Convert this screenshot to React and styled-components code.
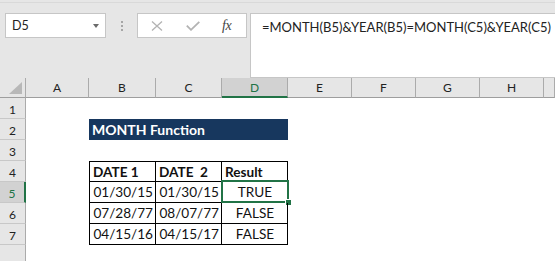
import React from "react"
import styled, { createGlobalStyle } from "styled-components"

const GlobalStyle = createGlobalStyle`
  body {
    margin: 0;
    font-family: Lato, "Liberation Sans", sans-serif;
  }
`

const green = "#217346"

const Window = styled.div`
  width: 555px;
  height: 261px;
  overflow: hidden;
  background: #e6e6e6;
  display: flex;
  flex-direction: column;
`

const FormulaRow = styled.div`
  height: 86px;
  box-sizing: border-box;
  margin-top: 2px;
  border-top: 1px solid #d9d9d9;
  padding: 10px 0 0 5px;
  display: flex;
  align-items: flex-start;
`

const NameBox = styled.div`
  width: 101px;
  height: 25px;
  box-sizing: border-box;
  background: white;
  border: 1px solid #c6c6c6;
  padding: 0 6px 0 6px;
  display: flex;
  align-items: center;
  justify-content: space-between;
  font-size: 12.5px;
  color: #222;
`

const Caret = styled.span`
  width: 0;
  height: 0;
  border-left: 3.5px solid transparent;
  border-right: 3.5px solid transparent;
  border-top: 4px solid #6a6a6a;
`

const Grip = styled.div`
  width: 31px;
  height: 25px;
  display: flex;
  flex-direction: column;
  align-items: center;
  justify-content: center;
  gap: 2px;
`

const Dot = styled.span`
  width: 2px;
  height: 2px;
  background: #a6a6a6;
`

const FxBox = styled.div`
  width: 110px;
  height: 25px;
  box-sizing: border-box;
  background: white;
  border: 1px solid #c6c6c6;
  display: flex;
  align-items: center;
  padding: 0 0 0 13px;
`

const Fx = styled.span`
  font-family: "Liberation Serif", serif;
  font-style: italic;
  font-size: 14px;
  color: #444;
  margin-left: 22px;
  letter-spacing: -0.5px;
`

const FormulaInput = styled.div`
  flex: 1;
  margin-left: 3px;
  height: 65px;
  box-sizing: border-box;
  background: white;
  border: 1px solid #c6c6c6;
  border-right: none;
  padding: 5px 0 0 11px;
  font-size: 13px;
  color: #222;
  white-space: nowrap;
`

const Sheet = styled.div`
  display: grid;
  grid-template-columns: 26px 63px 67px 66px 66px 64px 64px 64px 64px 1fr;
  grid-template-rows: 20px repeat(8, 21px);
  background: white;
`

const Corner = styled.div`
  background: #e6e6e6;
  border-bottom: 1px solid #9e9e9e;
  border-right: 1px solid #ababab;
  box-sizing: border-box;
  display: flex;
  align-items: flex-end;
  justify-content: flex-end;
  padding: 0 3px 3px 0;
`

const ColHead = styled.div`
  box-sizing: border-box;
  background: ${p => (p.$active ? "#d2d2d2" : "#e6e6e6")};
  border-right: 1px solid #ababab;
  border-bottom: ${p => (p.$active ? `2px solid ${green}` : "1px solid #9e9e9e")};
  display: flex;
  align-items: center;
  justify-content: center;
  padding-top: ${p => (p.$active ? "1px" : "0")};
  font-size: 12px;
  color: ${p => (p.$active ? green : "#222")};
`

const RowHead = styled.div`
  box-sizing: border-box;
  background: ${p => (p.$active ? "#d2d2d2" : "#e6e6e6")};
  border-bottom: 1px solid #c8c8c8;
  border-right: ${p => (p.$active ? `2px solid ${green}` : "1px solid #ababab")};
  display: flex;
  align-items: center;
  justify-content: center;
  padding-top: 3px;
  font-size: 12px;
  color: ${p => (p.$active ? green : "#222")};
`

const Cell = styled.div`
  position: relative;
  box-sizing: border-box;
  font-size: 13.6px;
  line-height: 20px;
  color: #111;
  white-space: pre;
  text-align: ${p => p.$align || "left"};
  padding: 0 2px 0 3px;
  font-weight: ${p => (p.$bold ? 700 : 400)};
  border-right: ${p => (p.$boxed ? "1px solid #000" : "none")};
  border-bottom: ${p => (p.$boxed ? "1px solid #000" : "none")};
  border-left: ${p => (p.$left ? "1px solid #000" : "none")};
  border-top: ${p => (p.$top ? "1px solid #000" : "none")};
`

const Title = styled.div`
  grid-column: 3 / span 3;
  background: #17375e;
  color: white;
  font-weight: 700;
  font-size: 14px;
  line-height: 21px;
  padding-left: 3px;
`

const Selection = styled.div`
  position: absolute;
  left: -1px;
  top: -2px;
  right: -2px;
  bottom: -1px;
  border: 2px solid ${green};
  pointer-events: none;
`

const Handle = styled.span`
  position: absolute;
  right: -4px;
  bottom: -4px;
  width: 5px;
  height: 5px;
  background: ${green};
  border: 1px solid white;
  border-right: none;
  border-bottom: none;
`

const columns = ["A", "B", "C", "D", "E", "F", "G", "H", "I"]

const table = {
  4: [
    { text: "DATE 1", bold: true },
    { text: "DATE  2", bold: true },
    { text: "Result", bold: true }
  ],
  5: [
    { text: "01/30/15", align: "right" },
    { text: "01/30/15", align: "right" },
    { text: "TRUE", align: "center", selected: true }
  ],
  6: [
    { text: "07/28/77", align: "right" },
    { text: "08/07/77", align: "right" },
    { text: "FALSE", align: "center" }
  ],
  7: [
    { text: "04/15/16", align: "right" },
    { text: "04/15/17", align: "right" },
    { text: "FALSE", align: "center" }
  ]
}

const CrossIcon = () => (
  <svg width="12" height="10" viewBox="0 0 12 10">
    <path d="M1 0.5 L11 9.5 M11 0.5 L1 9.5" stroke="#b3b3b3" strokeWidth="1.3" fill="none" />
  </svg>
)

const CheckIcon = () => (
  <svg width="14" height="10" viewBox="0 0 14 10" style={{ marginLeft: 23 }}>
    <path d="M0.8 4.6 L5 8.8 L13.3 0.8" stroke="#b3b3b3" strokeWidth="1.8" fill="none" />
  </svg>
)

const CornerIcon = () => (
  <svg width="13" height="12" viewBox="0 0 13 12">
    <polygon points="13,0 13,12 0,12" fill="#b8b8b8" />
  </svg>
)

const SheetRow = ({ row }) => {
  const cells = []
  cells.push(
    <RowHead key="h" $active={row === 5}>
      {row < 8 ? row : ""}
    </RowHead>
  )
  columns.forEach((col, i) => {
    if (row === 2 && col === "B") {
      cells.push(<Title key={col}>MONTH Function</Title>)
      return
    }
    if (row === 2 && (col === "C" || col === "D")) return
    const data = table[row] && i >= 1 && i <= 3 ? table[row][i - 1] : null
    if (data) {
      cells.push(
        <Cell
          key={col}
          $boxed
          $left={i === 1}
          $top={row === 4}
          $bold={data.bold}
          $align={data.align}
        >
          {data.text}
          {data.selected && (
            <Selection>
              <Handle />
            </Selection>
          )}
        </Cell>
      )
    } else {
      cells.push(<Cell key={col} />)
    }
  })
  return cells
}

export default function App() {
  return (
    <>
      <GlobalStyle />
      <Window>
        <FormulaRow>
          <NameBox>
            D5
            <Caret />
          </NameBox>
          <Grip>
            <Dot />
            <Dot />
            <Dot />
          </Grip>
          <FxBox>
            <CrossIcon />
            <CheckIcon />
            <Fx>fx</Fx>
          </FxBox>
          <FormulaInput>=MONTH(B5)&amp;YEAR(B5)=MONTH(C5)&amp;YEAR(C5)</FormulaInput>
        </FormulaRow>
        <Sheet>
          <Corner>
            <CornerIcon />
          </Corner>
          {columns.map(c => (
            <ColHead key={c} $active={c === "D"}>
              {c === "I" ? "" : c}
            </ColHead>
          ))}
          {[1, 2, 3, 4, 5, 6, 7, 8].map(r => (
            <SheetRow key={r} row={r} />
          ))}
        </Sheet>
      </Window>
    </>
  )
}
